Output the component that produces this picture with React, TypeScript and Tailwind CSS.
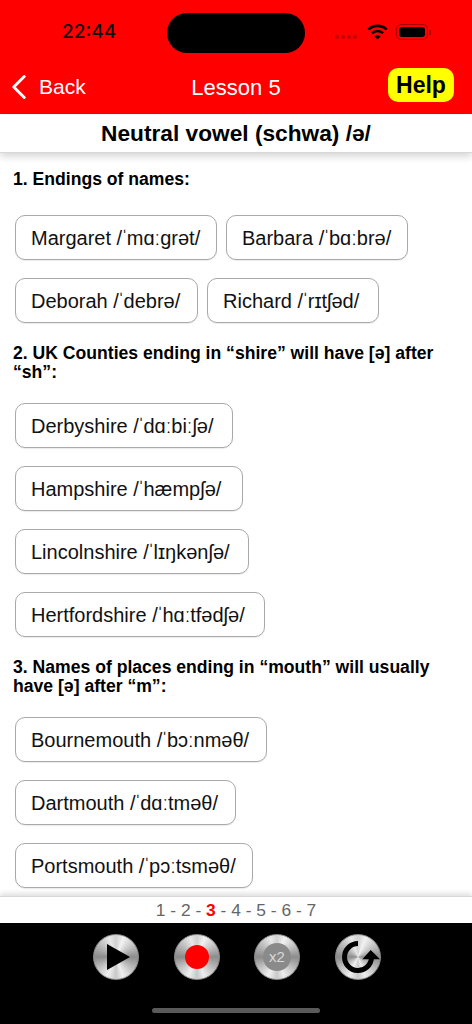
import { ChevronLeft } from "lucide-react";

const metal =
  "bg-[conic-gradient(#d0d0d0_0deg,#f2f2f2_22deg,#c4c4c4_55deg,#8c8c8c_90deg,#bdbdbd_125deg,#eeeeee_160deg,#c8c8c8_180deg,#f0f0f0_205deg,#c0c0c0_238deg,#8a8a8a_270deg,#b8b8b8_305deg,#e8e8e8_340deg,#d0d0d0_360deg)]";

function Word({ name, ipa, width }: { name: string; ipa: string; width: string }) {
  return (
    <div className={`h-[45px] pl-[15px] flex items-center rounded-[10px] border border-[#a9a9a9] bg-white text-[20px] text-[#111] whitespace-nowrap shadow-[0_1px_1px_rgba(0,0,0,0.08)] ${width}`}>
      <span className="whitespace-pre">{name} /</span>
      <span className="-mx-[1px]">ˈ</span>
      <span>{ipa}/</span>
    </div>
  );
}

function Heading({ children }: { children: React.ReactNode }) {
  return <p className="text-[17.6px] leading-[19px] font-bold text-black pr-3">{children}</p>;
}

function Disc({ children }: { children: React.ReactNode }) {
  return (
    <div className={`w-[46px] h-[46px] rounded-full border border-[#8c8c8c] flex items-center justify-center relative ${metal}`}>
      {children}
    </div>
  );
}

export default function App() {
  return (
    <div className="w-[472px] h-[1024px] flex flex-col bg-white overflow-hidden font-['Liberation_Sans',Arial,sans-serif]">
      {/* red header */}
      <div className="h-[114px] bg-[#ff0000] flex flex-col shrink-0">
        <div className="h-[69px] pt-[13px] flex items-start relative">
          <span className="ml-[62px] mt-[7px] text-[19px] leading-[24px] font-medium text-[#111] font-['Inter',sans-serif]">22:44</span>
          <div className="absolute left-[167px] top-[13px] w-[138px] h-[40px] rounded-full bg-black" />
          <div className="absolute left-[335px] top-[35px] flex gap-[2px]">
            <span className="w-[4px] h-[4px] rounded-full bg-[#c40000]" />
            <span className="w-[4px] h-[4px] rounded-full bg-[#c40000]" />
            <span className="w-[4px] h-[4px] rounded-full bg-[#c40000]" />
            <span className="w-[4px] h-[4px] rounded-full bg-[#c40000]" />
          </div>
          <svg className="absolute left-[367px] top-[24px]" width="21" height="16" viewBox="0 0 21 16" fill="none" stroke="#000" strokeWidth="2.6">
            <path d="M1.3 5.6a13.2 13.2 0 0 1 18.4 0" />
            <path d="M5 9.2a8 8 0 0 1 11 0" />
            <path d="M10.5 15.6l-3-3a4.3 4.3 0 0 1 6 0z" fill="#000" stroke="none" />
          </svg>
          <div className="absolute left-[396px] top-[24px] w-[32px] h-[16px] rounded-[5px] border border-[#a80000] p-[2px]">
            <div className="w-full h-full rounded-[3px] bg-black" />
          </div>
          <div className="absolute left-[429px] top-[30px] w-[1.5px] h-[5px] bg-[#a80000]" />
        </div>
        <div className="flex-1 relative flex items-center justify-center">
          <span className="text-[22px] leading-[26px] font-medium text-white -mt-[8px]">Lesson 5</span>
          <div className="absolute -left-[2px] -top-[3px] flex items-center text-white">
            <ChevronLeft size={42} strokeWidth={1.7} />
            <span className="text-[21px] leading-[26px] -ml-[1px] text-white">Back</span>
          </div>
          <div className="absolute left-[388px] -top-[1px] w-[66px] h-[34px] rounded-[10px] bg-[#ffff00] flex items-center justify-center text-[23px] font-bold text-black">
            Help
          </div>
        </div>
      </div>

      {/* lesson title */}
      <div className="h-[38px] mt-[1px] shrink-0 flex items-center justify-center text-[22.7px] font-bold text-black border-b border-[#d8d8d8] shadow-[0_3px_8px_rgba(0,0,0,0.18)] relative">
        Neutral vowel (schwa) /ə/
      </div>

      {/* lesson content */}
      <div className="flex-1 overflow-hidden pl-[15px] pr-2 pt-[17px] flex flex-col">
        <div className="-ml-[2px]">
          <Heading>1. Endings of names:</Heading>
        </div>
        <div className="mt-[26px] flex gap-[9px]">
          <Word name="Margaret" ipa="mɑːgrət" width="w-[202px]" />
          <Word name="Barbara" ipa="bɑːbrə" width="w-[182px]" />
        </div>
        <div className="mt-[18px] flex gap-[9px]">
          <Word name="Deborah" ipa="debrə" width="w-[183px]" />
          <Word name="Richard" ipa="rɪtʃəd" width="w-[172px]" />
        </div>
        <div className="mt-[21px] -ml-[2px]">
          <Heading>2. UK Counties ending in “shire” will have [ə] after “sh”:</Heading>
        </div>
        <div className="mt-[21px] flex flex-col items-start gap-[18px]">
          <Word name="Derbyshire" ipa="dɑːbiːʃə" width="w-[218px]" />
          <Word name="Hampshire" ipa="hæmpʃə" width="w-[228px]" />
          <Word name="Lincolnshire" ipa="lɪŋkənʃə" width="w-[234px]" />
          <Word name="Hertfordshire" ipa="hɑːtfədʃə" width="w-[250px]" />
        </div>
        <div className="mt-[21px] -ml-[2px]">
          <Heading>3. Names of places ending in “mouth” will usually have [ə] after “m”:</Heading>
        </div>
        <div className="mt-[21px] flex flex-col items-start gap-[18px]">
          <Word name="Bournemouth" ipa="bɔːnməθ" width="w-[252px]" />
          <Word name="Dartmouth" ipa="dɑːtməθ" width="w-[221px]" />
          <Word name="Portsmouth" ipa="pɔːtsməθ" width="w-[238px]" />
        </div>
      </div>

      {/* page numbers */}
      <div className="h-[27px] shrink-0 flex items-center justify-center text-[17.4px] text-[#666] bg-white border-t border-[#d8d8d8] shadow-[0_-3px_5px_rgba(0,0,0,0.12)] relative">
        <span className="whitespace-pre">1 - 2 - </span>
        <span className="font-bold text-[#ff0000]">3</span>
        <span className="whitespace-pre"> - 4 - 5 - 6 - 7</span>
      </div>

      {/* player controls */}
      <div className="h-[101px] shrink-0 bg-black relative">
        <div className="pt-[11px] pl-[93px] flex gap-[34.5px]">
          <Disc>
            <svg width="24" height="28" viewBox="0 0 24 28" className="ml-[3px]">
              <path d="M1 1l23 13L1 27z" fill="#000" />
            </svg>
          </Disc>
          <Disc>
            <div className="w-[24px] h-[24px] rounded-full bg-[#ff0000]" />
          </Disc>
          <Disc>
            <div className="w-[28px] h-[28px] rounded-full bg-[#8a8a8a] flex items-center justify-center text-[15px] text-[#d8d8d8]">
              x2
            </div>
          </Disc>
          <Disc>
            <svg width="46" height="46" viewBox="0 0 46 46" fill="none" className="absolute -left-[1px] -top-[1px]">
              <path d="M23 9.5A13.5 13.5 0 1 0 36.5 24" stroke="#000" strokeWidth="5" />
              <path d="M35.7 16L45 25.3H27.3z" fill="#000" />
            </svg>
          </Disc>
        </div>
        <div className="absolute left-[152px] top-[85px] w-[168px] h-[5px] rounded-full bg-[#5a5a5a]" />
      </div>
    </div>
  );
}
